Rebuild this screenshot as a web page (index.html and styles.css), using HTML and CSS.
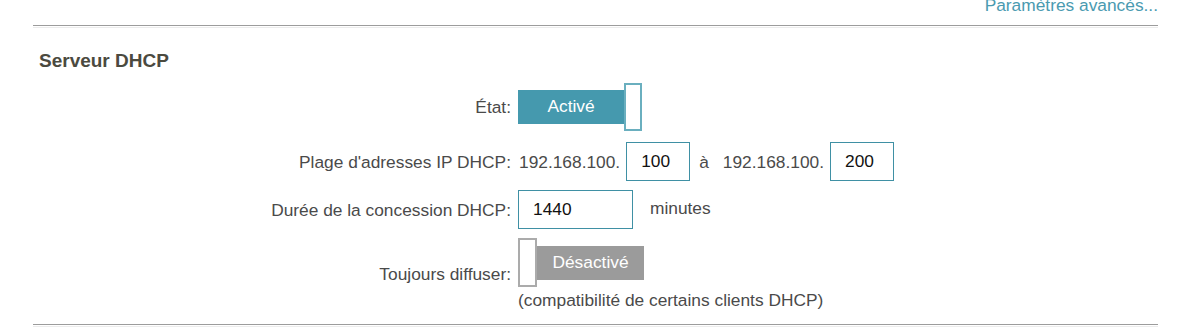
FILE: index.html
```html
<!DOCTYPE html>
<html lang="fr">
<head>
<meta charset="utf-8">
<title>Serveur DHCP</title>
<link rel="stylesheet" href="styles.css">
</head>
<body>
<div class="page">
  <div class="toplinks"><a class="adv" href="#">Paramètres avancés...</a></div>
  <div class="rule"></div>
  <section class="dhcp">
    <h2 class="title">Serveur DHCP</h2>
    <div class="form">
      <div class="row row-state">
        <span class="label">État:</span>
        <div class="val">
          <span class="toggle on"><span class="tbox">Activé</span><span class="knob"></span></span>
        </div>
      </div>
      <div class="row row-range">
        <span class="label">Plage d'adresses IP DHCP:</span>
        <div class="val">
          <span class="ip">192.168.100.</span>
          <span class="field short">100</span>
          <span class="to">à</span>
          <span class="ip">192.168.100.</span>
          <span class="field short">200</span>
        </div>
      </div>
      <div class="row row-lease">
        <span class="label">Durée de la concession DHCP:</span>
        <div class="val">
          <span class="field long">1440</span>
          <span class="unit">minutes</span>
        </div>
      </div>
      <div class="row row-bcast">
        <span class="label">Toujours diffuser:</span>
        <div class="val">
          <span class="toggle off"><span class="knob"></span><span class="tbox">Désactivé</span></span>
        </div>
      </div>
      <div class="row row-note">
        <span class="label"></span>
        <div class="val"><span class="note">(compatibilité de certains clients DHCP)</span></div>
      </div>
    </div>
  </section>
  <div class="rule bottom"></div>
</div>
</body>
</html>
```
FILE: styles.css
```css
html, body {
  margin: 0;
  padding: 0;
  background: #ffffff;
}

body {
  font-family: "Liberation Sans", Arial, sans-serif;
  font-size: 17.33px;
  color: #4a4a4a;
  overflow: hidden;
}

.page {
  padding: 0 42px 0 33px;
}

.toplinks {
  display: flex;
  justify-content: flex-end;
  height: 20px;
  line-height: 20px;
  margin-top: -5px;
}

.adv {
  color: #4a9ab0;
  text-decoration: none;
}

.rule {
  margin-top: 10px;
  height: 1px;
  border-top: 1px solid #9c9c9c;
  border-bottom: 1px solid #ececec;
}

.rule.bottom {
  margin-top: 14px;
}

.dhcp {
  padding-top: 22px;
}

.title {
  margin: 0;
  padding-left: 6px;
  font-size: 19px;
  line-height: 22px;
  font-weight: bold;
  color: #4b4a3f;
}

.form {
  margin-top: 11px;
  display: flex;
  flex-direction: column;
}

.row {
  display: grid;
  grid-template-columns: 478px auto;
  column-gap: 7px;
  align-items: center;
  line-height: 20px;
}

.label {
  justify-self: end;
  white-space: nowrap;
}

.val {
  display: flex;
  align-items: center;
}

.row-state { height: 48px; }
.row-range { height: 39px; margin-top: 11px; }
.row-lease { height: 39px; margin-top: 9px; }
.row-bcast { height: 49px; margin-top: 9px; }
.row-bcast .label { align-self: end; padding-bottom: 3px; }
.row-note { margin-top: 3px; }

.toggle {
  display: flex;
  align-items: center;
}

.tbox {
  height: 34px;
  line-height: 33px;
  color: #ffffff;
  text-align: center;
}

.toggle.on .tbox {
  width: 106px;
  background: #4599ae;
}

.toggle.on .knob {
  width: 14px;
  height: 44px;
  border: 2px solid #6aafbf;
  background: #ffffff;
}

.toggle.off .tbox {
  width: 107px;
  background: #9b9b9b;
}

.toggle.off .knob {
  width: 15px;
  height: 45px;
  border: 2px solid #ababab;
  background: #ffffff;
}

.ip {
  margin-left: 1px;
}

.field {
  box-sizing: border-box;
  height: 39px;
  line-height: 37px;
  border: 1px solid #3f90a4;
  color: #111111;
  padding-left: 14px;
}

.field.short {
  width: 64px;
  margin-left: 6px;
}

.field.long {
  width: 115px;
}

.to {
  margin: 0 13px 0 9px;
}

.unit {
  margin-left: 17px;
  margin-top: -4px;
}

.note {
  color: #4a4a4a;
}
```
